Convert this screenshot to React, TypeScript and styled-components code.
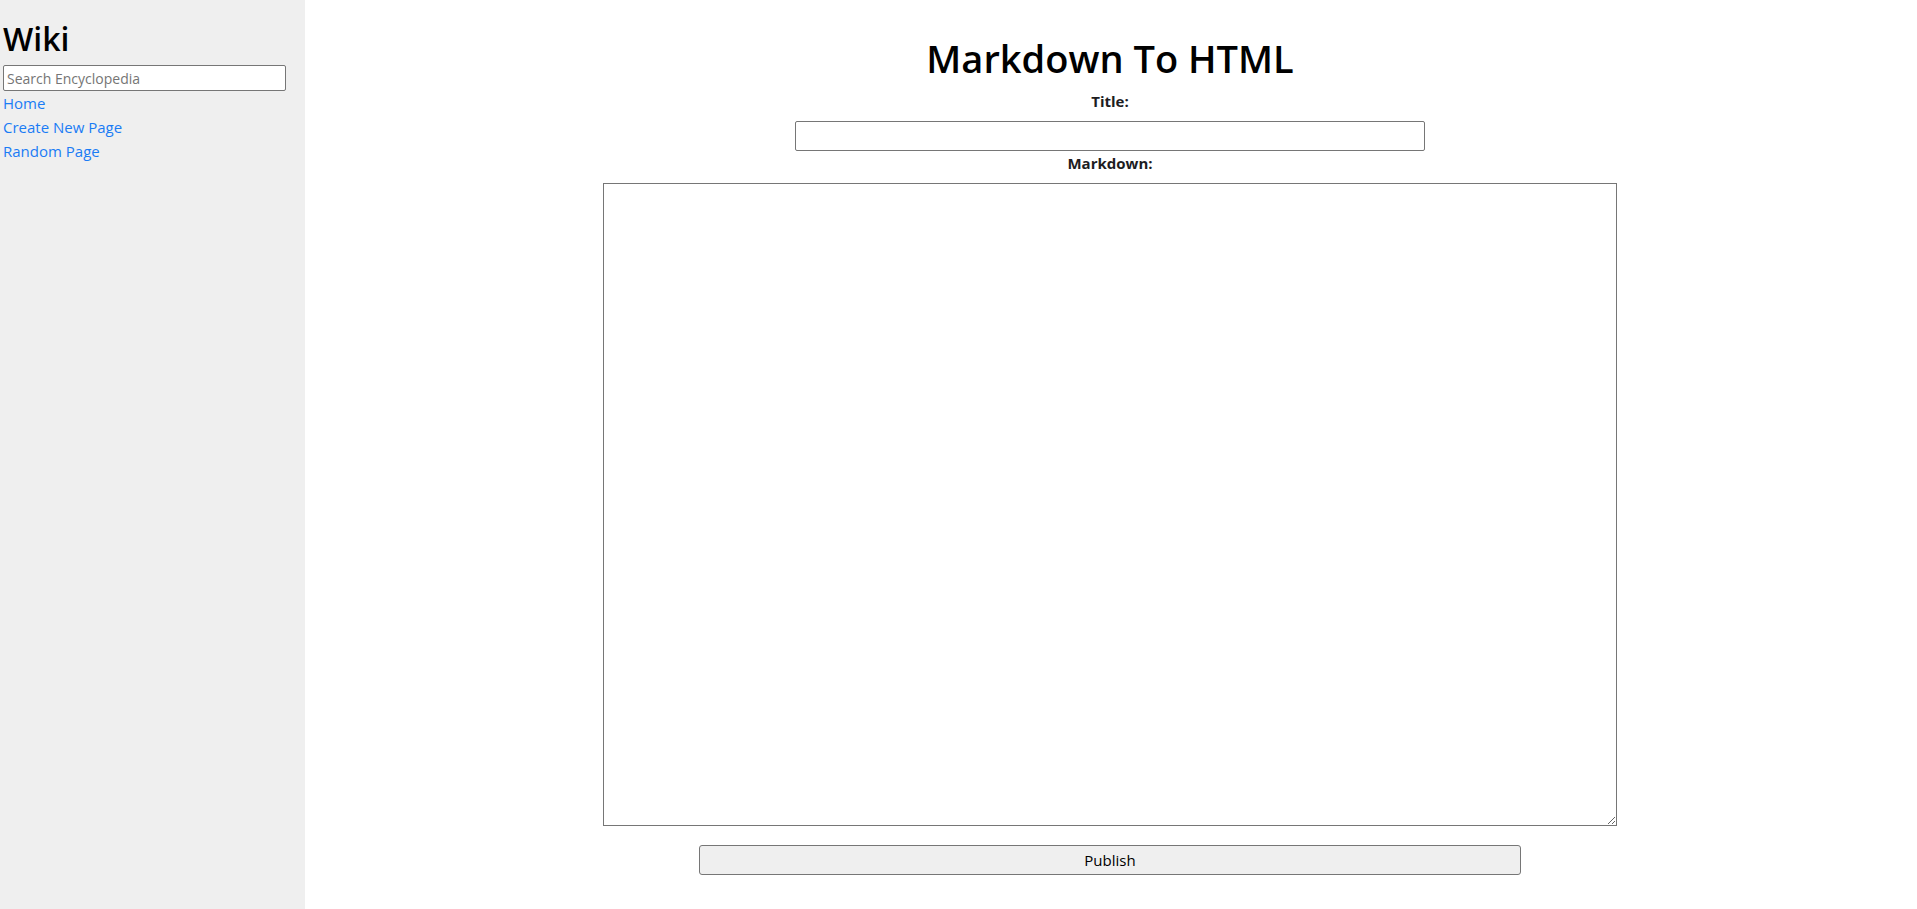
import React from "react";
import styled, { createGlobalStyle } from "styled-components";

const GlobalStyle = createGlobalStyle`
  * { box-sizing: border-box; }
  html, body { margin: 0; padding: 0; background: #ffffff; }
  body { font-family: "Open Sans", "Noto Sans", sans-serif; color: #000; }
`;

const Layout = styled.div`
  display: flex;
  min-height: 100vh;
`;

const Sidebar = styled.aside`
  width: 305px;
  flex: 0 0 305px;
  background: #efefef;
  padding: 0 3px;
  display: flex;
  flex-direction: column;
`;

const SiteTitle = styled.h2`
  margin: 19px 0 0;
  font-size: 32px;
  line-height: 40px;
  font-weight: 550;
  color: #000;
`;

const SearchInput = styled.input`
  margin-top: 6px;
  width: 283px;
  height: 26px;
  border: 1px solid #767676;
  border-radius: 2px;
  background: #fff;
  padding: 0 3px;
  font-family: inherit;
  font-size: 14px;
  color: #000;
  outline: none;
  &::placeholder { color: #757575; }
`;

const NavLink = styled.a`
  display: block;
  font-size: 15px;
  line-height: 24px;
  color: #1a7cf5;
  text-decoration: none;
`;

const Main = styled.main`
  flex: 1;
  display: flex;
  flex-direction: column;
  align-items: center;
  padding-right: 2px;
`;

const PageTitle = styled.h1`
  margin: 34px 0 0;
  font-size: 38px;
  line-height: 48px;
  font-weight: 550;
  color: #000;
`;

const Form = styled.form`
  display: flex;
  flex-direction: column;
  align-items: center;
`;

const FieldLabel = styled.label<{ $top: number }>`
  margin-top: ${(p) => p.$top}px;
  font-size: 15px;
  line-height: 20px;
  font-weight: 700;
  color: #1d1d1f;
`;

const TitleInput = styled.input`
  margin-top: 10px;
  width: 630px;
  height: 30px;
  border: 1px solid #767676;
  border-radius: 2px;
  padding: 0 4px;
  font-family: inherit;
  font-size: 15px;
  outline: none;
`;

const MarkdownArea = styled.textarea`
  margin-top: 10px;
  width: 1014px;
  height: 643px;
  border: 1px solid #767676;
  border-radius: 0;
  padding: 4px;
  font-family: "Liberation Mono", monospace;
  font-size: 13px;
  outline: none;
`;

const PublishButton = styled.button`
  margin-top: 19px;
  width: 822px;
  height: 30px;
  background: #efefef;
  border: 1px solid #767676;
  border-radius: 3px;
  font-family: inherit;
  font-size: 15px;
  color: #000;
  cursor: pointer;
`;

export default function App() {
  return (
    <>
      <GlobalStyle />
      <Layout>
        <Sidebar>
          <SiteTitle>Wiki</SiteTitle>
          <SearchInput type="text" placeholder="Search Encyclopedia" />
          <NavLink href="#">Home</NavLink>
          <NavLink href="#">Create New Page</NavLink>
          <NavLink href="#">Random Page</NavLink>
        </Sidebar>
        <Main>
          <PageTitle>Markdown To HTML</PageTitle>
          <Form onSubmit={(e) => e.preventDefault()}>
            <FieldLabel $top={9} htmlFor="title">Title:</FieldLabel>
            <TitleInput id="title" type="text" />
            <FieldLabel $top={2} htmlFor="markdown">Markdown:</FieldLabel>
            <MarkdownArea id="markdown" />
            <PublishButton type="submit">Publish</PublishButton>
          </Form>
        </Main>
      </Layout>
    </>
  );
}
